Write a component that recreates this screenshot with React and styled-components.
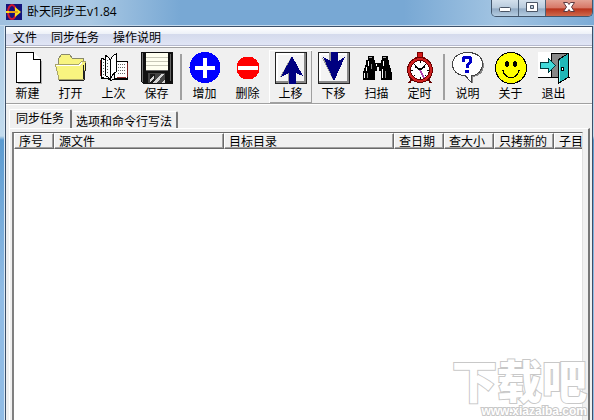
import { useState } from 'react';
import styled, { createGlobalStyle } from 'styled-components';

const tools = [
  { name: '新建', icon: NewIcon },
  { name: '打开', icon: FolderIcon },
  { name: '上次', icon: BookIcon },
  { name: '保存', icon: FloppyIcon },
  { separator: true },
  { name: '增加', icon: AddIcon },
  { name: '删除', icon: RemoveIcon },
  { name: '上移', icon: UpIcon, raised: true },
  { name: '下移', icon: DownIcon },
  { name: '扫描', icon: BinocularsIcon },
  { name: '定时', icon: ClockIcon },
  { separator: true },
  { name: '说明', icon: HelpIcon },
  { name: '关于', icon: SmileIcon },
  { name: '退出', icon: ExitIcon },
];

const columns = [
  { name: '序号', width: 40 },
  { name: '源文件', width: 170 },
  { name: '目标目录', width: 170 },
  { name: '查日期', width: 50 },
  { name: '查大小', width: 50 },
  { name: '只拷新的', width: 60 },
  { name: '子目', width: 60 },
];

export default function App() {
  const [tab, setTab] = useState(0);

  return (
    <>
      <GlobalStyle />
      <Window>
        <TitleBar>
          <AppIcon />
          <Title>卧天同步王v1.84</Title>
          <WindowButtons>
            <WindowButton aria-label="最小化">
              <MinimizeIcon />
            </WindowButton>
            <WindowButton aria-label="最大化">
              <MaximizeIcon />
            </WindowButton>
            <CloseButton aria-label="关闭">
              <CloseIcon />
            </CloseButton>
          </WindowButtons>
        </TitleBar>
        <Client>
          <MenuBar>
            <MenuItem>文件</MenuItem>
            <MenuItem>同步任务</MenuItem>
            <MenuItem>操作说明</MenuItem>
          </MenuBar>
          <Toolbar>
            {tools.map((tool, i) =>
              tool.separator ? (
                <Separator key={i} />
              ) : (
                <Tool key={i} $raised={tool.raised}>
                  <tool.icon />
                  {tool.name}
                </Tool>
              )
            )}
          </Toolbar>
          <Tabs role="tablist">
            <Tab role="tab" $active={tab === 0} aria-selected={tab === 0} onClick={() => setTab(0)}>
              同步任务
            </Tab>
            <Tab role="tab" $active={tab === 1} aria-selected={tab === 1} onClick={() => setTab(1)}>
              选项和命令行写法
            </Tab>
          </Tabs>
          <Page>
            <List>
              <Table>
                <colgroup>
                  {columns.map((column) => (
                    <Col key={column.name} $width={column.width} />
                  ))}
                </colgroup>
                <thead>
                  <tr>
                    {columns.map((column) => (
                      <Th key={column.name}>{column.name}</Th>
                    ))}
                  </tr>
                </thead>
              </Table>
            </List>
          </Page>
        </Client>
        <Watermark>
          <WatermarkName>下载吧</WatermarkName>
          <WatermarkSite>www.xiazaiba.com</WatermarkSite>
        </Watermark>
      </Window>
    </>
  );
}

function AppIcon() {
  return (
    <svg width="16" height="16" viewBox="0 0 16 16">
      <rect width="16" height="16" fill="#14147c" />
      <ellipse cx="6" cy="8" rx="4" ry="7" fill="none" stroke="#d01830" strokeWidth="2" />
      <path d="M0 7h9V3l6 5-6 5V9H0z" fill="#f8e020" />
      <path d="M3 8h9" stroke="#d06010" />
    </svg>
  );
}

function MinimizeIcon() {
  return (
    <svg width="14" height="12" viewBox="0 0 14 12">
      <rect x="1.5" y="5.5" width="11" height="4" rx="1" fill="#fff" stroke="#4a5565" />
    </svg>
  );
}

function MaximizeIcon() {
  return (
    <svg width="14" height="12" viewBox="0 0 14 12">
      <path d="M1.5 .5h11v9h-11zM5.5 3.5v3h3v-3z" fill="#fff" fillRule="evenodd" stroke="#4a5565" />
    </svg>
  );
}

function CloseIcon() {
  return (
    <svg width="14" height="12" viewBox="0 0 14 12">
      <path d="M1.5 .5h4L7 2.500 8.500 .5h4L9.500 5l3 4.500h-4L7 7.500 5.500 9.500h-4L4.500 5z" fill="#fff" stroke="#5d3a40" />
    </svg>
  );
}

function NewIcon() {
  return (
    <Icon viewBox="0 0 32 32">
      <path d="M6 31.500h23.500V9" fill="none" stroke="#b0b0b0" />
      <path d="M4.5 .5h17l7 7v23h-24z" fill="#fff" stroke="#000" />
      <path d="M21.5 .5v7h7" fill="#fff" stroke="#000" />
    </Icon>
  );
}

function FolderIcon() {
  return (
    <Icon viewBox="0 0 32 32">
      <path d="M3.5 26.5v-20l3-4h8l3 4h11v6" fill="#f8f480" stroke="#8a8a6a" />
      <path d="M.5 12.5h23l3-3h4.500l-2 18h-25z" fill="#f8f480" stroke="#a8a468" />
      <path d="M1 13.5h23l3-3" fill="none" stroke="#fff" />
      <path d="M4 28h25l2-17" fill="none" stroke="#222" />
      <path d="M28.5 13v14" stroke="#222" />
    </Icon>
  );
}

function BookIcon() {
  return (
    <Icon viewBox="0 0 32 32">
      <path d="M3.5 6.5l8 2v19l-8-2z" fill="#fff" stroke="#000" />
      <path d="M16.5 9.500h13v17h-13z" fill="#fff" stroke="#000" />
      <path d="M7.500 3.500c3 1 5 3 5 7v17c-1-2-3-3-5-4z" fill="#fff" stroke="#000" />
      <path d="M12.500 27.500v-17c0-3 2-7 6-9v18c-3 2-5 4-6 8z" fill="#fff" stroke="#000" />
      <path d="M5.500 10v14M9.500 8v14" stroke="#555" strokeDasharray="1 2" />
      <path d="M20.500 12v11M22.500 12v11M24.500 12v11M26.500 12v11" stroke="#666" strokeDasharray="1 2" />
      <path d="M2.500 8v16M29.500 11v14" stroke="#7a2020" />
      <path d="M3 26h7l3 3 2-2h15" fill="none" stroke="#000" />
      <path d="M19 25.500h9" stroke="#903030" />
    </Icon>
  );
}

function FloppyIcon() {
  return (
    <Icon viewBox="0 0 32 32">
      <path d="M0 0h32v32H2l-2-2z" fill="#111" />
      <path d="M1.5 1v29" stroke="#777" />
      <path d="M5 1h22v17H5z" fill="#fffff0" />
      <path d="M5 5.5h22M5 9.5h22M5 13.5h22" stroke="#c8c8b8" />
      <path d="M5 18.5h22M29.5 2v27" stroke="#666" />
      <path d="M7 21h17v10H7z" fill="#444" />
      <path d="M9 22h5v9H9z" fill="#1b1b1b" />
      <path d="M12 31l8-9h3l-7 9zM21 31l3-4v4zM9 27l4-4v3l-4 4z" fill="#d4d4d4" />
    </Icon>
  );
}

function AddIcon() {
  return (
    <Icon viewBox="0 0 32 32">
      <circle cx="16" cy="15.5" r="15.5" fill="#00f" />
      <path d="M14 6h4v8h8v4h-8v8h-4v-8H6v-4h8z" fill="#fff" />
    </Icon>
  );
}

function RemoveIcon() {
  return (
    <Icon viewBox="0 0 32 32">
      <circle cx="16" cy="16" r="11.5" fill="#f00" />
      <path d="M6 14h20v4H6z" fill="#fff" />
    </Icon>
  );
}

function ArrowFrame() {
  return (
    <>
      <rect x="0" y="0" width="32" height="32" rx="1" fill="#222" />
      <path d="M1 1h30v30H1z" fill="#888" />
      <path d="M1 1h28v28H1z" fill="#fff" />
      <path d="M3 3h26v26H3z" fill="#f4f4f4" />
    </>
  );
}

function UpIcon() {
  return (
    <Icon viewBox="0 0 32 32">
      <ArrowFrame />
      <path d="M16 5L5 25l8-4v11h3V10z" fill="#999" />
      <path d="M17 4l11 20-7-3v11h-7V21l-8 4z" fill="#000080" />
    </Icon>
  );
}

function DownIcon() {
  return (
    <Icon viewBox="0 0 32 32">
      <ArrowFrame />
      <path d="M11 0v9L4 6l11 22 2-4-4-16V0z" fill="#999" />
      <path d="M13 0h7v9l7-4-11 24L5 5l8 4z" fill="#000080" />
    </Icon>
  );
}

function BinocularsIcon() {
  return (
    <Icon viewBox="0 0 32 32">
      <path
        d="M7 4h6v4h1v3h6V8h1V4h6v4h1v4l2 5 1 5v6H20v-9h-2v-4h-2v4h-2v9H2v-6l1-5 2-5V8h2z"
        fill="#000"
      />
      <path d="M8 5.500h3M22 5.500h3" stroke="#aaa" />
      <path d="M7.500 9v5M5.500 15v4M3.500 21v5M22.500 9v5M21.500 17v9M15.500 12v2" stroke="#fff" />
      <path d="M6.500 21v5M24.500 19v7M10.500 12v5" stroke="#888" />
    </Icon>
  );
}

function ClockIcon() {
  return (
    <Icon viewBox="0 0 32 32">
      <path d="M8 27l-3 4M24 27l3 4" stroke="#600" strokeWidth="2" />
      <circle cx="16" cy="3" r="3" fill="#d81818" stroke="#700" />
      <path d="M11 6h10" stroke="#900" strokeWidth="2" />
      <circle cx="16" cy="18" r="11" fill="#fff" stroke="#600" strokeWidth="4" />
      <circle cx="16" cy="18" r="11" fill="none" stroke="#d02020" strokeWidth="2" />
      <path d="M16 9v2M16 25v2M7 18h2M23 18h2M10 12l1 1M21 23l1 1M10 24l1-1M21 13l1-1" stroke="#000" />
      <path d="M11 14l5 4 5-4" fill="none" stroke="#000" strokeWidth="2" />
      <path d="M16 18l4 8" stroke="#b040b0" strokeWidth="2" />
    </Icon>
  );
}

function HelpIcon() {
  return (
    <Icon viewBox="0 0 32 32">
      <path d="M18 1c8 0 14 5 14 12s-4 11-11 12v7l-6-7C7 24 2 20 2 13S9 1 18 1z" fill="#888" />
      <path
        d="M16 .5c9 0 14.500 5 14.500 11.500S26 23 19.500 24v6.500L13.500 24C6 23 .5 19 .5 12S7 .5 16 .5z"
        fill="#fff"
        stroke="#444"
      />
      <path d="M11 10V8c0-4 8-4 8 0 0 3-4 3-4 7v1" fill="none" stroke="#0000c8" strokeWidth="3" />
      <rect x="13" y="18" width="4" height="3" fill="#0000c8" />
    </Icon>
  );
}

function SmileIcon() {
  return (
    <Icon viewBox="0 0 32 32">
      <circle cx="16" cy="16" r="15.500" fill="#ff0" stroke="#000" />
      <ellipse cx="12" cy="12" rx="2" ry="3" fill="#000" />
      <ellipse cx="20" cy="12" rx="2" ry="3" fill="#000" />
      <path d="M7 18h2M23 18h2M8 18c1 10 15 10 16 0" fill="none" stroke="#000" />
    </Icon>
  );
}

function ExitIcon() {
  return (
    <Icon viewBox="0 0 32 32">
      <path d="M0 0h32v26H0z" fill="#fff" />
      <path d="M0 25.500h32" stroke="#000" />
      <path d="M13 1.500h16v24H13z" fill="#888" stroke="#000" />
      <path d="M20 8l10-6.500v24L20 31.500z" fill="#20b8b8" stroke="#000" />
      <path d="M21.500 9v21" stroke="#90ffff" />
      <path d="M23 15h2v3h-2z" fill="#fff" stroke="#000" />
      <path d="M2.500 10.500h8v-4l7 7-7 7v-4h-8z" fill="#40dada" stroke="#003c40" />
    </Icon>
  );
}

const GlobalStyle = createGlobalStyle`
  * {
    box-sizing: border-box;
  }

  body {
    margin: 0;
    overflow: hidden;
    font-family: 'Liberation Sans', 'Noto Sans CJK SC', sans-serif;
    font-size: 12px;
    color: #000;
  }

  button {
    padding: 0;
    border: 0;
    background: none;
    font: inherit;
    color: inherit;
  }
`;

const Window = styled.div`
  position: relative;
  display: flex;
  flex-direction: column;
  height: 100vh;
  padding: 0 1px 0 5px;
  background: linear-gradient(#a4c6e4, #c4dcee 136px, #5c9bd0 140px, #91bce5 70%);
`;

const TitleBar = styled.div`
  display: flex;
  align-items: flex-start;
  gap: 5px;
  height: 26px;
  margin: 0 -1px 0 -5px;
  padding-left: 6px;
  background: linear-gradient(90deg, #9fc0df, #a9c8e3 90px, #78a8d4 180px, #78a8d4 68%, #a2c4e2 84%, #7cabd6);
  border-bottom: 1px solid #c3d9ec;

  > svg {
    margin-top: 4px;
  }
`;

const Title = styled.span`
  line-height: 24px;
  font-family: 'Open Sans', 'Noto Sans CJK SC', sans-serif;
`;

const WindowButtons = styled.div`
  display: flex;
  height: 17px;
  margin-left: auto;
  margin-right: 1px;
  border: 1px solid #42566c;
  border-top: 0;
  border-radius: 0 0 5px 5px;
  overflow: hidden;
`;

const WindowButton = styled.button`
  display: flex;
  align-items: center;
  justify-content: center;
  width: 27px;
  border-right: 1px solid #4c6075;
  background: linear-gradient(#d3e0ec, #b7cadc 50%, #92abc4 55%, #b4cce1);
`;

const CloseButton = styled(WindowButton)`
  width: 46px;
  border-right: 0;
  background: linear-gradient(#e3a294, #d77766 50%, #b8331c 55%, #ce694c);
`;

const Client = styled.div`
  display: flex;
  flex: 1;
  flex-direction: column;
  min-height: 0;
  border: 1px solid #3c5069;
  border-bottom: 0;
  background: #f0f0f0;
  box-shadow: -1px 0 #d8e8f6;
`;

const MenuBar = styled.div`
  display: flex;
  gap: 14px;
  height: 19px;
  padding-left: 7px;
  background: linear-gradient(#fff, #edf1f8 7px, #d4daec 7px, #e0e5f5);
  border-bottom: 1px solid #b4b8cc;
`;

const MenuItem = styled.button`
  padding-top: 2px;
  line-height: 18px;
`;

const Toolbar = styled.div`
  display: flex;
  height: 58px;
  border-top: 1px solid #fff;
  border-bottom: 1px solid #a0a0a0;
  padding-top: 3px;
  box-shadow: inset 0 1px #a0a0a0, 0 1px #fff;
`;

const Tool = styled.button`
  display: flex;
  flex-direction: column;
  align-items: center;
  gap: 1px;
  width: 43px;
  height: 53px;
  padding-top: 2px;
  line-height: 18px;
  box-shadow: ${(props) => (props.$raised ? 'inset 1px 1px #fff, inset -1px -1px #a0a0a0' : 'none')};
`;

const Icon = styled.svg`
  flex: none;
  width: 32px;
  height: 32px;
  shape-rendering: crispEdges;
`;

const Separator = styled.div`
  width: 2px;
  height: 46px;
  margin: 4px 1px 0 2px;
  background: #a0a0a0;
`;

const Tabs = styled.div`
  display: flex;
  align-items: flex-end;
  height: 24px;
  padding-left: 3px;
`;

const Tab = styled.button`
  height: ${(props) => (props.$active ? 19 : 17)}px;
  padding: ${(props) => (props.$active ? '0 6px' : '2px 4px 0')};
  border-top: 1px solid #fff;
  border-left: ${(props) => (props.$active ? '1px solid #fff' : '0')};
  border-right: 2px solid #777;
  border-radius: 2px 2px 0 0;
  line-height: 16px;
`;

const Page = styled.div`
  display: flex;
  flex: 1;
  min-height: 0;
  margin: 0 2px 0 3px;
  padding: 3px 5px 0 2px;
  border: 1px solid #fff;
  border-right: 2px solid #777;
  border-bottom: 0;
`;

const List = styled.div`
  flex: 1;
  min-width: 0;
  overflow: hidden;
  border-top: 1px solid #696969;
  border-left: 2px solid #808080;
  border-right: 1px solid #e0e0e0;
  background: #fff;
`;

const Table = styled.table`
  width: 600px;
  table-layout: fixed;
  border-collapse: separate;
  border-spacing: 0;
`;

const Col = styled.col`
  width: ${(props) => props.$width}px;
`;

const Th = styled.th`
  height: 16px;
  padding: 2px 0 0 4px;
  border-top: 1px solid #fff;
  border-left: 1px solid #fff;
  border-right: 1px solid #696969;
  border-bottom: 1px solid #696969;
  background: #f0f0f0;
  box-shadow: inset -1px -1px #a0a0a0;
  font-weight: normal;
  line-height: 12px;
  text-align: left;
  white-space: nowrap;
`;

const Watermark = styled.div`
  position: absolute;
  right: 7px;
  bottom: 1px;
  display: flex;
  flex-direction: column;
  align-items: flex-end;
  font-weight: 900;
  color: #fff;
  paint-order: stroke fill;
  -webkit-text-stroke: 2px #c8c8c8;
  pointer-events: none;
`;

const WatermarkName = styled.span`
  font-family: 'Noto Sans CJK SC', sans-serif;
  font-size: 45px;
  line-height: 46px;
`;

const WatermarkSite = styled.span`
  font-size: 12px;
  line-height: 16px;
`;
